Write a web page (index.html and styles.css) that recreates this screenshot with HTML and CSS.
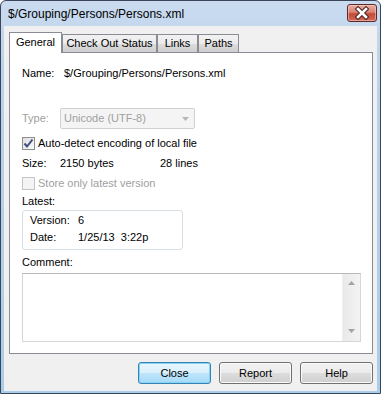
FILE: index.html
```html
<!DOCTYPE html>
<html>
<head>
    <title>$/Grouping/Persons/Persons.xml</title>
    <link rel="stylesheet" href="styles.css">
</head>
<body>
    <div class="window">
        <div class="titlebar">
            <span class="title">$/Grouping/Persons/Persons.xml</span>
            <div class="close-x">
                <svg width="28" height="16" viewBox="0 0 28 16">
                    <path d="M10 4 L18 12 M18 4 L10 12" stroke="#4a2420" stroke-width="4.6" stroke-linecap="square"/>
                    <path d="M10 4 L18 12 M18 4 L10 12" stroke="#ffffff" stroke-width="2.6" stroke-linecap="square"/>
                </svg>
            </div>
        </div>
        <div class="client">
            <div class="tabs">
                <div class="tab active">General</div>
                <div class="tab tab-checkout">Check Out Status</div>
                <div class="tab tab-links">Links</div>
                <div class="tab tab-paths">Paths</div>
            </div>
            <div class="panel">
                <div class="row name-row">
                    <span class="label name-label">Name:</span>
                    <span>$/Grouping/Persons/Persons.xml</span>
                </div>
                <div class="row type-row">
                    <span class="label short-label disabled">Type:</span>
                    <div class="combo">
                        <span>Unicode (UTF-8)</span>
                        <svg class="combo-arrow" width="7" height="4" viewBox="0 0 7 4"><path d="M0 0 H7 L3.5 4 Z" fill="#b6b6b6"/></svg>
                    </div>
                </div>
                <div class="row check-row">
                    <span class="checkbox">
                        <svg width="11" height="11" viewBox="0 0 11 11"><path d="M1.5 5.5 L4 8.5 L9.5 1.5" fill="none" stroke="#3c4f7c" stroke-width="2"/></svg>
                    </span>
                    <span>Auto-detect encoding of local file</span>
                </div>
                <div class="row size-row">
                    <span class="label short-label">Size:</span>
                    <span class="bytes">2150 bytes</span>
                    <span>28 lines</span>
                </div>
                <div class="row store-row">
                    <span class="checkbox off"></span>
                    <span class="disabled">Store only latest version</span>
                </div>
                <div class="row latest-row">Latest:</div>
                <div class="group">
                    <div class="row">
                        <span class="group-label">Version:</span>
                        <span>6</span>
                    </div>
                    <div class="row date-row">
                        <span class="group-label">Date:</span>
                        <span class="date">1/25/13  3:22p</span>
                    </div>
                </div>
                <div class="row comment-row">Comment:</div>
                <div class="memo">
                    <div class="memo-text"></div>
                    <div class="vscroll">
                        <svg width="7" height="4" viewBox="0 0 7 4"><path d="M0 4 H7 L3.5 0 Z" fill="#a3a3a3"/></svg>
                        <svg width="7" height="4" viewBox="0 0 7 4"><path d="M0 0 H7 L3.5 4 Z" fill="#a3a3a3"/></svg>
                    </div>
                </div>
            </div>
            <div class="buttons">
                <button class="btn default">Close</button>
                <button class="btn">Report</button>
                <button class="btn">Help</button>
            </div>
        </div>
    </div>
</body>
</html>
```

FILE: styles.css
```css
body {
    margin: 0;
    background: #fff;
    font-family: "Liberation Sans", Arial, sans-serif;
    font-size: 11px;
    color: #000;
}
.window {
    width: 381px;
    height: 394px;
    box-sizing: border-box;
    border: 1px solid #3a4658;
    border-radius: 6px 6px 0 0;
    background: linear-gradient(#cadbef, #bcd3ec 60px, #a9cdea);
    display: flex;
    flex-direction: column;
}
.titlebar {
    height: 25px;
    display: flex;
    align-items: flex-start;
    padding: 0 3px 0 7px;
}
.title {
    font-size: 12px;
    line-height: 14px;
    margin-top: 6px;
}
.close-x {
    margin-left: auto;
    margin-top: 3px;
    width: 28px;
    height: 16px;
    border: 1px solid #5b2b27;
    border-radius: 3px;
    background: linear-gradient(#e9ada3, #d98474 45%, #c4493a 55%, #d36a5a);
    box-shadow: inset 0 0 0 1px rgba(255, 220, 210, 0.5);
}
.close-x svg {
    display: block;
}
.client {
    flex: 1;
    margin: 0 3px 2px 3px;
    background: #f0f0f0;
    padding: 6px 4px 0 5px;
}
.tabs {
    display: flex;
    align-items: flex-end;
    height: 20px;
}
.tab {
    height: 18px;
    box-sizing: border-box;
    border: 1px solid #898c95;
    border-bottom: none;
    background: linear-gradient(#f2f2f2, #ebebeb 50%, #dddddd 50%, #cfcfcf);
    text-align: center;
    line-height: 17px;
}
.tab.active {
    width: 53px;
    height: 21px;
    margin-bottom: -1px;
    background: #fff;
    line-height: 19px;
    position: relative;
    z-index: 1;
}
.tab-checkout {
    width: 95px;
}
.tab-links {
    width: 41px;
}
.tab-paths {
    width: 41px;
}
.panel {
    width: 364px;
    box-sizing: border-box;
    border: 1px solid #898c95;
    background: #fff;
    padding: 0 11px 11px 12px;
}
.row {
    display: flex;
    align-items: center;
    height: 13px;
    line-height: 13px;
    white-space: nowrap;
}
.label {
    flex: none;
}
.name-label {
    width: 42px;
}
.short-label {
    width: 38px;
}
.disabled {
    color: #a0a0a0;
}
.name-row {
    margin-top: 14px;
}
.type-row {
    margin-top: 28px;
    height: 21px;
}
.combo {
    width: 135px;
    height: 21px;
    box-sizing: border-box;
    border: 1px solid #d0d0d0;
    border-radius: 2px;
    background: #f4f4f4;
    color: #a0a0a0;
    display: flex;
    align-items: center;
    padding-left: 3px;
}
.combo-arrow {
    margin-left: auto;
    margin-right: 5px;
}
.check-row {
    margin-top: 8px;
}
.checkbox {
    width: 13px;
    height: 13px;
    box-sizing: border-box;
    border: 1px solid #8e8f8f;
    background: linear-gradient(135deg, #dedede, #fbfbfb);
    margin-right: 3px;
    display: flex;
    align-items: center;
    justify-content: center;
    flex: none;
}
.checkbox.off {
    border-color: #c4c4c4;
    background: #f4f4f4;
}
.size-row {
    margin-top: 7px;
}
.bytes {
    width: 100px;
}
.store-row {
    margin-top: 7px;
}
.latest-row {
    margin-top: 5px;
}
.group {
    margin-top: 2px;
    width: 161px;
    height: 40px;
    box-sizing: border-box;
    border: 1px solid #d5dfe5;
    border-radius: 3px;
    padding: 3px 0 0 7px;
}
.group-label {
    width: 48px;
}
.date-row {
    margin-top: 4px;
}
.date {
    white-space: pre;
}
.comment-row {
    margin-top: 6px;
}
.memo {
    margin-top: 4px;
    width: 339px;
    height: 69px;
    box-sizing: border-box;
    border: 1px solid #d4d6da;
    border-top-color: #b6b8bd;
    display: flex;
}
.memo-text {
    flex: 1;
}
.vscroll {
    width: 17px;
    background: linear-gradient(90deg, #e9e9e9, #f3f3f3);
    border-left: 1px solid #efefef;
    display: flex;
    flex-direction: column;
    align-items: center;
    justify-content: space-between;
    padding: 7px 0 8px;
}
.vscroll svg {
    display: block;
}
.buttons {
    display: flex;
    justify-content: flex-end;
    gap: 8px;
    margin-top: 8px;
    width: 364px;
}
.btn {
    width: 73px;
    height: 22px;
    border: 1px solid #707070;
    border-radius: 3px;
    background: linear-gradient(#f2f2f2, #ebebeb 50%, #dddddd 50%, #cfcfcf);
    box-shadow: inset 0 0 0 1px #fbfbfb;
    font-family: "Liberation Sans", Arial, sans-serif;
    font-size: 11px;
    color: #000;
    padding: 0;
}
.btn.default {
    border-color: #3c7fb1;
    background: linear-gradient(#eaf6fd, #d9f0fc 50%, #bee6fd 50%, #a7d9f5);
    box-shadow: inset 0 0 0 1px #7fd6f8;
}
```
